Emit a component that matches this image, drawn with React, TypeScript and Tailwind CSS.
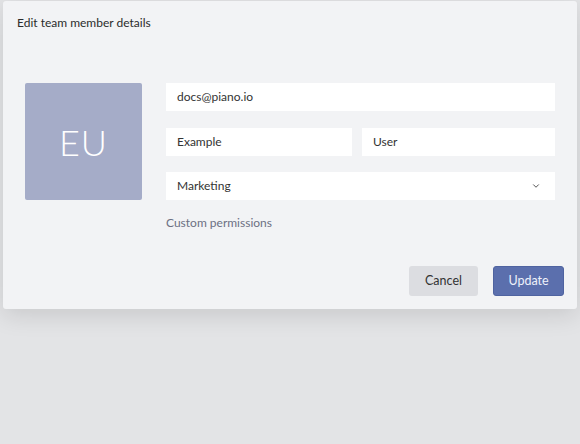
import { ChevronDown } from 'lucide-react'

export default function App() {
  return (
    <div className="w-[580px] h-[444px] bg-[#e3e4e6] px-[3px] pt-px overflow-hidden font-['Lato',sans-serif]">
      {/* Modal */}
      <div className="w-[574px] h-[308px] bg-[#f2f3f5] rounded-[3px] shadow-[0_6px_24px_rgba(0,0,0,0.12)] flex flex-col">
        <div className="pl-[14px] pt-[14px] h-[30px] text-[12px] leading-4 text-[#2b2b2b]">
          Edit team member details
        </div>

        <div className="flex gap-6 pl-[22px] pr-[22px] mt-[52px]">
          <div className="w-[117px] h-[117px] bg-[#a5acc8] rounded-[2px] flex items-center justify-center">
            <span className="text-white text-[36px] font-light tracking-wide">EU</span>
          </div>

          <div className="flex-1 flex flex-col">
            <div className="h-7 bg-white flex items-center px-[11px] text-[12px] text-[#333]">
              docs@piano.io
            </div>
            <div className="flex gap-[10px] mt-[17px]">
              <div className="w-[186px] h-7 bg-white flex items-center px-[11px] text-[12px] text-[#333]">
                Example
              </div>
              <div className="flex-1 h-7 bg-white flex items-center px-[11px] text-[12px] text-[#333]">
                User
              </div>
            </div>
            <div className="h-7 mt-4 bg-white flex items-center justify-between pl-[11px] pr-[14px] text-[12px] text-[#333]">
              <span>Marketing</span>
              <ChevronDown size={10} strokeWidth={2.4} className="text-[#555]" />
            </div>
            <div className="mt-[15px] text-[12px] leading-4 text-[#6c7083]">
              Custom permissions
            </div>
          </div>
        </div>

        <div className="mt-auto flex justify-end gap-[15px] pr-[13px] pb-[13px]">
          <button className="w-[69px] h-[30px] rounded-[3px] bg-[#dcdde1] text-[12.5px] text-[#333] pt-px">
            Cancel
          </button>
          <button className="w-[71px] h-[30px] rounded-[3px] bg-[#5b6fad] border border-[#4f63a0] text-[12.5px] text-[#eef1fa] pt-px">
            Update
          </button>
        </div>
      </div>
    </div>
  )
}
